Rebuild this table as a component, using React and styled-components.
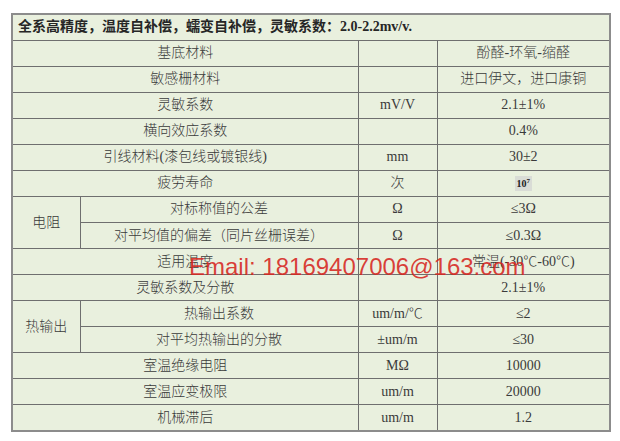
import React from "react";
import styled, { createGlobalStyle } from "styled-components";

const GlobalStyle = createGlobalStyle`
    html, body {
        margin: 0;
        padding: 0;
        background: #ffffff;
    }
`;

const Page = styled.div`
    position: relative;
    width: 620px;
    height: 441px;
    padding: 13px 11px 0 11px;
    box-sizing: border-box;
    font-family: "Liberation Serif", "Noto Sans CJK SC", serif;
    color: #3a3a3a;
`;

const SpecTable = styled.table`
    width: 598px;
    height: 419px;
    table-layout: fixed;
    border-collapse: collapse;
    background: #e9f0de;
    border: 2px solid #8c8c8c;
    font-size: 14px;
`;

const Row = styled.tr`
    height: 26px;
`;

const Cell = styled.td`
    border: 1px solid #6f6f6f;
    padding: 0 4px;
    text-align: ${(p) => (p.$left ? "left" : "center")};
    vertical-align: middle;
    white-space: nowrap;
    overflow: hidden;
    line-height: 1;
    font-weight: 300;
`;

const TitleCell = styled(Cell)`
    font-size: 14px;
    font-weight: 700;
    color: #262626;
    padding-left: 5px;
`;

const Unit = styled(Cell)`
    font-size: 14px;
`;

const Power = styled.span`
    display: inline-block;
    background: #d9dcd6;
    padding: 2px 2px 1px;
    font-size: 10px;
    font-weight: 700;
    color: #222;

    sup {
        font-size: 7px;
    }
`;

const Watermark = styled.div`
    position: absolute;
    left: 189px;
    top: 255px;
    font-family: "Liberation Sans", Arial, sans-serif;
    font-size: 24px;
    line-height: 24px;
    color: rgba(214, 38, 30, 0.88);
    white-space: nowrap;
    pointer-events: none;
`;

const rows = [
    { label: "基底材料", unit: "", value: "酚醛-环氧-缩醛" },
    { label: "敏感栅材料", unit: "", value: "进口伊文，进口康铜" },
    { label: "灵敏系数", unit: "mV/V", value: "2.1±1%" },
    { label: "横向效应系数", unit: "", value: "0.4%" },
    { label: "引线材料(漆包线或镀银线)", unit: "mm", value: "30±2" },
    { label: "疲劳寿命", unit: "次", value: "power" },
    {
        group: "电阻",
        items: [
            { label: "对标称值的公差", unit: "Ω", value: "≤3Ω" },
            { label: "对平均值的偏差（同片丝栅误差）", unit: "Ω", value: "≤0.3Ω" },
        ],
    },
    { label: "适用温度", unit: "", value: "常温(-30℃-60℃)" },
    { label: "灵敏系数及分散", unit: "", value: "2.1±1%" },
    {
        group: "热输出",
        items: [
            { label: "热输出系数", unit: "um/m/℃", value: "≤2" },
            { label: "对平均热输出的分散", unit: "±um/m", value: "≤30" },
        ],
    },
    { label: "室温绝缘电阻", unit: "MΩ", value: "10000" },
    { label: "室温应变极限", unit: "um/m", value: "20000" },
    { label: "机械滞后", unit: "um/m", value: "1.2" },
];

const Value = ({ v }) =>
    v === "power" ? (
        <Power>
            10<sup>7</sup>
        </Power>
    ) : (
        v
    );

const App = () => {
    return (
        <Page>
            <GlobalStyle />
            <SpecTable>
                <colgroup>
                    <col style={{ width: 68 }} />
                    <col style={{ width: 278 }} />
                    <col style={{ width: 79 }} />
                    <col style={{ width: 173 }} />
                </colgroup>
                <tbody>
                    <Row>
                        <TitleCell colSpan={4} $left>
                            全系高精度，温度自补偿，蠕变自补偿，灵敏系数：2.0-2.2mv/v.
                        </TitleCell>
                    </Row>
                    {rows.map((r, i) =>
                        r.group ? (
                            r.items.map((it, j) => (
                                <Row key={`${i}-${j}`}>
                                    {j === 0 && (
                                        <Cell rowSpan={r.items.length}>{r.group}</Cell>
                                    )}
                                    <Cell>{it.label}</Cell>
                                    <Unit>{it.unit}</Unit>
                                    <Cell>
                                        <Value v={it.value} />
                                    </Cell>
                                </Row>
                            ))
                        ) : (
                            <Row key={i}>
                                <Cell colSpan={2}>{r.label}</Cell>
                                <Unit>{r.unit}</Unit>
                                <Cell>
                                    <Value v={r.value} />
                                </Cell>
                            </Row>
                        )
                    )}
                </tbody>
            </SpecTable>
            <Watermark>Email: 18169407006@163.com</Watermark>
        </Page>
    );
};

export default App;
